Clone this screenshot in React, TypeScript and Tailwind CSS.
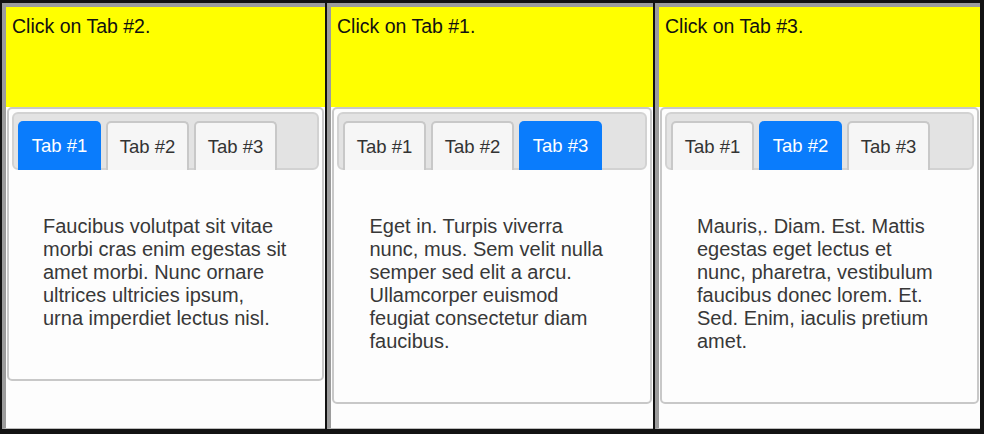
import { useState } from 'react';

interface PanelProps {
  prompt: string;
  initialTab: number;
  texts: string[];
  widthClass: string;
}

const tabs = ['Tab #1', 'Tab #2', 'Tab #3'];

function TabPanel({ prompt, initialTab, texts, widthClass }: PanelProps) {
  const [active, setActive] = useState(initialTab);

  return (
    <div
      className={`${widthClass} h-[426px] shrink-0 flex flex-col bg-[#fdfdfd] border-l-4 border-t-4 border-[#9c9c9c] border-b border-b-[#bdbdbd] border-b-dotted`}
    >
      {/* Instruction strip */}
      <div className="h-[100px] shrink-0 bg-[#ffff00] pl-[6px] pt-[5px] text-[19.5px] text-[#111]">
        {prompt}
      </div>

      {/* Tabs card */}
      <div className="mx-[1px] rounded-[5px] border-2 border-[#c8c8c8] bg-[#fdfdfd]">
        <div className="mx-[3px] mt-[3px] flex gap-[5px] rounded-[6px] border-2 border-[#d2d2d2] bg-[#e3e3e3] px-[4px] pt-[7px]">
          {tabs.map((label, i) => (
            <button
              key={label}
              onClick={() => setActive(i)}
              className={`-mb-[2px] flex h-[49px] w-[83px] items-center justify-center rounded-t-[5px] text-[18.5px] ${
                active === i
                  ? 'bg-[#0a7cfc] text-white'
                  : 'border-2 border-b-0 border-[#c8c8c8] bg-[#f6f6f6] text-[#333]'
              }`}
            >
              {label}
            </button>
          ))}
        </div>

        <div className="pt-[45px] pb-[49px]">
          <p className="mx-auto w-[245px] text-[20px] leading-[23px] text-[#383838]">{texts[active]}</p>
        </div>
      </div>
    </div>
  );
}

const copy = [
  'Faucibus volutpat sit vitae morbi cras enim egestas sit amet morbi. Nunc ornare ultrices ultricies ipsum, urna imperdiet lectus nisl.',
  'Mauris,. Diam. Est. Mattis egestas eget lectus et nunc, pharetra, vestibulum faucibus donec lorem. Et. Sed. Enim, iaculis pretium amet.',
  'Eget in. Turpis viverra nunc, mus. Sem velit nulla semper sed elit a arcu. Ullamcorper euismod feugiat consectetur diam faucibus.',
];

export default function App() {
  return (
    <div
      className="flex h-[434px] w-[984px] gap-[2px] overflow-hidden bg-[#121212] pl-[2px] pt-[3px]"
      style={{ fontFamily: '"Liberation Sans", Arial, sans-serif' }}
    >
      <TabPanel prompt="Click on Tab #2." initialTab={0} texts={copy} widthClass="w-[323px]" />
      <TabPanel prompt="Click on Tab #1." initialTab={2} texts={copy} widthClass="w-[326px]" />
      <TabPanel prompt="Click on Tab #3." initialTab={1} texts={copy} widthClass="w-[325px]" />
    </div>
  );
}
